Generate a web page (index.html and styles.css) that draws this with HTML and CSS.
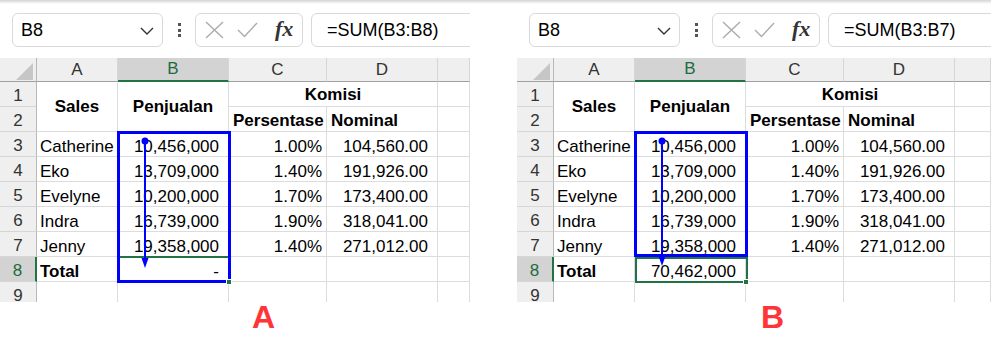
FILE: index.html
```html
<!DOCTYPE html>
<html lang="id">
<head>
    <meta charset="UTF-8" />
    <title>SUM range A vs B</title>
    <link rel="stylesheet" href="styles.css">
</head>
<body>
<div class="page">

    <!-- Panel A : range ikut baris total -->
    <div class="panel">
        <div class="formula-bar">
            <div class="name-box">
                <span>B8</span>
                <svg class="chev" width="14" height="8" viewBox="0 0 14 8"><path d="M1 1 L7 7 L13 1" fill="none" stroke="#333" stroke-width="1.4"/></svg>
            </div>
            <div class="grip"><i></i><i></i><i></i></div>
            <div class="fx-box">
                <svg width="19" height="18" viewBox="0 0 19 18"><path d="M1 1 L18 17 M18 1 L1 17" stroke="#ababab" stroke-width="1.4" fill="none"/></svg>
                <svg width="21" height="16" viewBox="0 0 21 16"><path d="M1 8 L7.5 14.5 L20 1" stroke="#ababab" stroke-width="1.4" fill="none"/></svg>
                <span class="fx">fx</span>
            </div>
            <div class="formula">=SUM(B3:B8)</div>
        </div>

        <div class="sheet">
            <div class="corner"><i></i></div>
            <div class="ch">A</div>
            <div class="ch sel">B</div>
            <div class="ch">C</div>
            <div class="ch">D</div>
            <div class="ch"></div>

            <div class="rh">1</div>
            <div class="c hd tall">Sales</div>
            <div class="c hd tall">Penjualan</div>
            <div class="c hd wide">Komisi</div>
            <div class="c"></div>

            <div class="rh">2</div>
            <div class="c hd2">Persentase</div>
            <div class="c hd2">Nominal</div>
            <div class="c"></div>

            <div class="rh">3</div>
            <div class="c">Catherine</div>
            <div class="c acc">10,456,000</div>
            <div class="c pct">1.00%</div>
            <div class="c acc">104,560.00</div>
            <div class="c"></div>

            <div class="rh">4</div>
            <div class="c">Eko</div>
            <div class="c acc">13,709,000</div>
            <div class="c pct">1.40%</div>
            <div class="c acc">191,926.00</div>
            <div class="c"></div>

            <div class="rh">5</div>
            <div class="c">Evelyne</div>
            <div class="c acc">10,200,000</div>
            <div class="c pct">1.70%</div>
            <div class="c acc">173,400.00</div>
            <div class="c"></div>

            <div class="rh">6</div>
            <div class="c">Indra</div>
            <div class="c acc">16,739,000</div>
            <div class="c pct">1.90%</div>
            <div class="c acc">318,041.00</div>
            <div class="c"></div>

            <div class="rh">7</div>
            <div class="c">Jenny</div>
            <div class="c acc">19,358,000</div>
            <div class="c pct">1.40%</div>
            <div class="c acc">271,012.00</div>
            <div class="c"></div>

            <div class="rh sel">8</div>
            <div class="c bold">Total</div>
            <div class="c acc">-</div>
            <div class="c"></div>
            <div class="c"></div>
            <div class="c"></div>

            <div class="rh">9</div>
            <div class="c"></div>
            <div class="c"></div>
            <div class="c"></div>
            <div class="c"></div>
            <div class="c"></div>

            <div class="active active-a"></div>
            <div class="range range-a"></div>
            <div class="handle handle-a"></div>
            <svg class="arrow" width="20" height="140" viewBox="135 75 20 140">
                <circle cx="145" cy="83" r="3.5" fill="#0000ff"/>
                <line x1="145" y1="83" x2="145" y2="201" stroke="#0000ff" stroke-width="2"/>
                <polygon points="141.5,200 148.5,200 145,210" fill="#0000ff"/>
            </svg>
        </div>

        <div class="label label-a">A</div>
    </div>

    <!-- Panel B : range berhenti di baris 7 -->
    <div class="panel">
        <div class="formula-bar">
            <div class="name-box">
                <span>B8</span>
                <svg class="chev" width="14" height="8" viewBox="0 0 14 8"><path d="M1 1 L7 7 L13 1" fill="none" stroke="#333" stroke-width="1.4"/></svg>
            </div>
            <div class="grip"><i></i><i></i><i></i></div>
            <div class="fx-box">
                <svg width="19" height="18" viewBox="0 0 19 18"><path d="M1 1 L18 17 M18 1 L1 17" stroke="#ababab" stroke-width="1.4" fill="none"/></svg>
                <svg width="21" height="16" viewBox="0 0 21 16"><path d="M1 8 L7.5 14.5 L20 1" stroke="#ababab" stroke-width="1.4" fill="none"/></svg>
                <span class="fx">fx</span>
            </div>
            <div class="formula">=SUM(B3:B7)</div>
        </div>

        <div class="sheet">
            <div class="corner"><i></i></div>
            <div class="ch">A</div>
            <div class="ch sel">B</div>
            <div class="ch">C</div>
            <div class="ch">D</div>
            <div class="ch"></div>

            <div class="rh">1</div>
            <div class="c hd tall">Sales</div>
            <div class="c hd tall">Penjualan</div>
            <div class="c hd wide">Komisi</div>
            <div class="c"></div>

            <div class="rh">2</div>
            <div class="c hd2">Persentase</div>
            <div class="c hd2">Nominal</div>
            <div class="c"></div>

            <div class="rh">3</div>
            <div class="c">Catherine</div>
            <div class="c acc">10,456,000</div>
            <div class="c pct">1.00%</div>
            <div class="c acc">104,560.00</div>
            <div class="c"></div>

            <div class="rh">4</div>
            <div class="c">Eko</div>
            <div class="c acc">13,709,000</div>
            <div class="c pct">1.40%</div>
            <div class="c acc">191,926.00</div>
            <div class="c"></div>

            <div class="rh">5</div>
            <div class="c">Evelyne</div>
            <div class="c acc">10,200,000</div>
            <div class="c pct">1.70%</div>
            <div class="c acc">173,400.00</div>
            <div class="c"></div>

            <div class="rh">6</div>
            <div class="c">Indra</div>
            <div class="c acc">16,739,000</div>
            <div class="c pct">1.90%</div>
            <div class="c acc">318,041.00</div>
            <div class="c"></div>

            <div class="rh">7</div>
            <div class="c">Jenny</div>
            <div class="c acc">19,358,000</div>
            <div class="c pct">1.40%</div>
            <div class="c acc">271,012.00</div>
            <div class="c"></div>

            <div class="rh sel">8</div>
            <div class="c bold">Total</div>
            <div class="c acc">70,462,000</div>
            <div class="c"></div>
            <div class="c"></div>
            <div class="c"></div>

            <div class="rh">9</div>
            <div class="c"></div>
            <div class="c"></div>
            <div class="c"></div>
            <div class="c"></div>
            <div class="c"></div>

            <div class="active active-b"></div>
            <div class="range range-b"></div>
            <div class="handle handle-b"></div>
            <svg class="arrow" width="20" height="140" viewBox="135 75 20 140">
                <circle cx="145" cy="83" r="3.5" fill="#0000ff"/>
                <line x1="145" y1="83" x2="145" y2="200" stroke="#0000ff" stroke-width="2"/>
                <polygon points="141.5,198 148.5,198 145,208" fill="#0000ff"/>
            </svg>
        </div>

        <div class="label label-b">B</div>
    </div>

</div>
</body>
</html>
```

FILE: styles.css
```css
* {
    box-sizing: border-box;
}

body {
    margin: 0;
    font-family: "Liberation Sans", Arial, sans-serif;
    background: #fff;
    color: #000;
}

.page {
    display: flex;
    gap: 47px;
    width: 991px;
    height: 338px;
    overflow: hidden;
    background: linear-gradient(#d4d4d4, #fff 4px) no-repeat;
}

.panel {
    width: 470px;
    flex: none;
    overflow: hidden;
}

.panel + .panel {
    flex: 1;
}

/* formula bar */
.formula-bar {
    display: flex;
    height: 58px;
    padding: 13px 0 0 12px;
    font-size: 18px;
}

.name-box,
.fx-box,
.formula {
    height: 34px;
    border: 1px solid #d9d9d9;
    border-radius: 6px;
    background: #fff;
    display: flex;
    align-items: center;
}

.name-box {
    width: 151px;
    flex: none;
    justify-content: space-between;
    padding: 0 8px 0 8px;
}

.chev {
    margin-top: 2px;
}

.grip {
    width: 32px;
    flex: none;
    display: flex;
    flex-direction: column;
    align-items: center;
    padding-top: 10px;
    gap: 2.5px;
}

.grip i {
    width: 3px;
    height: 3px;
    background: #555;
}

.fx-box {
    width: 108px;
    flex: none;
    padding-left: 9px;
    gap: 13px;
}

.fx {
    font-family: "Liberation Serif", "Times New Roman", serif;
    font-style: italic;
    font-weight: bold;
    font-size: 22px;
    color: #333;
    margin-left: 4px;
    margin-top: -2px;
}

.formula {
    width: 300px;
    flex: none;
    margin-left: 8px;
    padding-left: 15px;
}

/* sheet grid */
.sheet {
    position: relative;
    display: grid;
    grid-template-columns: 37px 81px 111px 98px 111px 1fr;
    grid-template-rows: 24px repeat(9, 25px);
    height: 244px;
    overflow: hidden;
    font-size: 17px;
}

.corner,
.ch,
.rh {
    background: #efefef;
    color: #333;
    display: flex;
    justify-content: center;
}

.corner {
    border-right: 1px solid #b8b8b8;
    border-bottom: 1px solid #a0a0a0;
    justify-content: flex-end;
    align-items: flex-end;
    padding: 0 3px 1px 0;
}

.corner i {
    width: 17px;
    height: 17px;
    background: #c6c6c6;
    clip-path: polygon(100% 0, 100% 100%, 0 100%);
}

.ch {
    align-items: center;
    border-right: 1px solid #d6d6d6;
    border-bottom: 1px solid #a0a0a0;
}

.ch.sel {
    background: #d3d3d3;
    color: #1d6b3e;
    border-bottom: 2px solid #217346;
}

.rh {
    align-items: flex-end;
    line-height: 19px;
    padding-bottom: 1px;
    border-right: 1px solid #b8b8b8;
    border-bottom: 1px solid #d6d6d6;
}

.rh.sel {
    background: #d3d3d3;
    color: #1d6b3e;
    border-right: 2px solid #217346;
}

.c {
    display: flex;
    align-items: flex-end;
    line-height: 19px;
    padding: 0 3px 0 3px;
    white-space: nowrap;
    border-right: 1px solid #dcdcdc;
    border-bottom: 1px solid #dcdcdc;
}

.acc {
    justify-content: flex-end;
    padding-right: 9px;
}

.pct {
    justify-content: flex-end;
    padding-right: 4px;
}

.bold,
.hd,
.hd2 {
    font-weight: bold;
}

.hd {
    justify-content: center;
    padding-bottom: 2px;
}

.hd.tall {
    grid-row: span 2;
    align-items: center;
    padding-bottom: 0;
}

.hd.wide {
    grid-column: span 2;
}

.hd2 {
    padding-left: 4px;
    padding-bottom: 1px;
}

/* overlays */
.active {
    position: absolute;
    border: 2px solid #217346;
}

.active-a {
    left: 117px;
    top: 198px;
    width: 114px;
    height: 27px;
}

.active-b {
    left: 118px;
    top: 199px;
    width: 113px;
    height: 26px;
}

.range {
    position: absolute;
    left: 117px;
    top: 73px;
    width: 114px;
    border: 3px solid #0000ff;
}

.range-a {
    height: 152px;
}

.range-b {
    height: 126px;
}

.handle {
    position: absolute;
    top: 221px;
    width: 6px;
    height: 6px;
    background: #217346;
    border: 1px solid #fff;
}

.handle-a {
    left: 226px;
}

.handle-b {
    left: 226px;
}

.arrow {
    position: absolute;
    left: 135px;
    top: 75px;
}

/* caption */
.label {
    font-weight: bold;
    font-size: 32px;
    line-height: 30px;
    color: #fe3437;
}

.label-a {
    padding-left: 252px;
}

.label-b {
    padding-left: 244px;
}
```
